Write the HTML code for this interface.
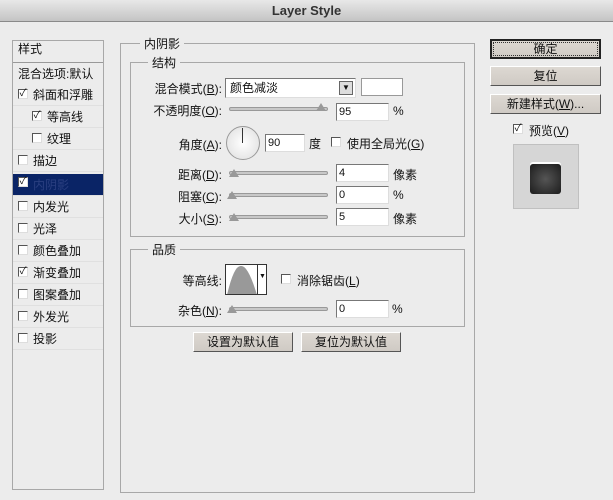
<!DOCTYPE html><html><head><meta charset="utf-8"><style>
*{box-sizing:border-box;margin:0;padding:0}
body{width:613px;height:500px;background:#ececec;font-family:"Liberation Sans","Noto Sans CJK SC","WenQuanYi Zen Hei",sans-serif;font-size:12px;color:#111;position:relative;overflow:hidden}
.a{position:absolute;white-space:nowrap}
.title{left:0;top:0;width:613px;height:22px;background:linear-gradient(#e8e8e8,#c4c4c4);border-bottom:1px solid #8a8a8a;text-align:center;font-size:13px;font-weight:bold;color:#333;line-height:22px}
.box{position:absolute;border:1px solid #a8a8a8}
.cb{position:absolute;width:10px;height:10px;background:#fff;border:1px solid #555;border-right-color:#ddd;border-bottom-color:#ddd;font-size:10px;line-height:8px;text-align:center}
.inp{position:absolute;height:18px;background:#fff;border:1px solid #777;border-right-color:#ddd;border-bottom-color:#ddd;padding-left:2px;line-height:16px;font-size:11px}
.track{position:absolute;height:4px;background:#c8c8c8;border:1px solid #999;border-radius:2px}
.thumb{position:absolute;width:0;height:0;border-left:5px solid transparent;border-right:5px solid transparent;border-bottom:8px solid #999}
.btn{position:absolute;height:20px;background:linear-gradient(#ddd8d2,#cfcac4);border:1px solid #fff;border-right-color:#555;border-bottom-color:#555;text-align:center;line-height:18px}
.row{position:absolute;left:13px;width:90px;height:22px;border-bottom:1px solid #e0e0e0;line-height:22px}
.lbl{position:absolute;text-align:right}
</style></head><body>
<div class="a title">Layer Style</div>
<!-- left list -->
<div class="box" style="left:12px;top:40px;width:92px;height:450px;background:#ececec"></div>
<div class="a" style="left:18px;top:40px">样式</div>
<div class="a" style="left:13px;top:62px;width:90px;border-top:1px solid #999"></div>
<div class="a" style="left:18px;top:65px">混合选项:默认</div>
<div class="row" style="top:84px"><span class="cb" style="left:5px;top:5px">✓</span><span class="a" style="left:20px">斜面和浮雕</span></div>
<div class="row" style="top:106px"><span class="cb" style="left:19px;top:5px">✓</span><span class="a" style="left:34px">等高线</span></div>
<div class="row" style="top:128px"><span class="cb" style="left:19px;top:5px"></span><span class="a" style="left:34px">纹理</span></div>
<div class="row" style="top:150px"><span class="cb" style="left:5px;top:5px"></span><span class="a" style="left:20px">描边</span></div>
<div class="row" style="top:174px;background:#0a2466;color:#0a2466"><span class="cb" style="left:5px;top:3px;color:#111">✓</span><span class="a" style="left:20px;color:#2a3f80">内阴影</span></div>
<div class="row" style="top:196px"><span class="cb" style="left:5px;top:5px"></span><span class="a" style="left:20px">内发光</span></div>
<div class="row" style="top:218px"><span class="cb" style="left:5px;top:5px"></span><span class="a" style="left:20px">光泽</span></div>
<div class="row" style="top:240px"><span class="cb" style="left:5px;top:5px"></span><span class="a" style="left:20px">颜色叠加</span></div>
<div class="row" style="top:262px"><span class="cb" style="left:5px;top:5px">✓</span><span class="a" style="left:20px">渐变叠加</span></div>
<div class="row" style="top:284px"><span class="cb" style="left:5px;top:5px"></span><span class="a" style="left:20px">图案叠加</span></div>
<div class="row" style="top:306px"><span class="cb" style="left:5px;top:5px"></span><span class="a" style="left:20px">外发光</span></div>
<div class="row" style="top:328px"><span class="cb" style="left:5px;top:5px"></span><span class="a" style="left:20px">投影</span></div>
<!-- main -->
<div class="box" style="left:120px;top:43px;width:355px;height:450px"></div>
<div class="a" style="left:140px;top:35px;background:#ececec;padding:0 4px">内阴影</div>
<div class="box" style="left:130px;top:62px;width:335px;height:175px"></div>
<div class="a" style="left:148px;top:54px;background:#ececec;padding:0 4px">结构</div>
<div class="lbl" style="right:391px;top:80px">混合模式(<u>B</u>):</div>
<div class="inp" style="left:225px;top:78px;width:131px;height:20px;font-size:12px;line-height:18px;padding-left:4px">颜色减淡</div>
<div class="a" style="left:339px;top:81px;width:14px;height:14px;background:#ddd;border:1px solid #666;font-size:8px;text-align:center;line-height:12px">▼</div>
<div class="a" style="left:361px;top:78px;width:42px;height:18px;background:#fff;border:1px solid #999"></div>
<div class="lbl" style="right:391px;top:102px">不透明度(<u>O</u>):</div>
<div class="track" style="left:229px;top:107px;width:99px"></div><div class="thumb" style="left:316px;top:103px"></div>
<div class="inp" style="left:336px;top:103px;width:53px">95</div><div class="a" style="left:393px;top:104px">%</div>
<div class="lbl" style="right:391px;top:136px">角度(<u>A</u>):</div>
<div class="a" style="left:226px;top:126px;width:34px;height:34px;border-radius:50%;background:radial-gradient(#fff,#ddd);border:1px solid #999"></div>
<div class="a" style="left:242px;top:128px;width:1px;height:15px;background:#333"></div>
<div class="inp" style="left:265px;top:134px;width:40px">90</div><div class="a" style="left:309px;top:135px">度</div>
<span class="cb" style="left:331px;top:137px"></span><div class="a" style="left:347px;top:135px">使用全局光(<u>G</u>)</div>
<div class="lbl" style="right:391px;top:166px">距离(<u>D</u>):</div>
<div class="track" style="left:229px;top:171px;width:99px"></div><div class="thumb" style="left:229px;top:169px"></div>
<div class="inp" style="left:336px;top:164px;width:53px">4</div><div class="a" style="left:393px;top:166px">像素</div>
<div class="lbl" style="right:391px;top:188px">阻塞(<u>C</u>):</div>
<div class="track" style="left:229px;top:193px;width:99px"></div><div class="thumb" style="left:227px;top:191px"></div>
<div class="inp" style="left:336px;top:186px;width:53px">0</div><div class="a" style="left:393px;top:188px">%</div>
<div class="lbl" style="right:391px;top:210px">大小(<u>S</u>):</div>
<div class="track" style="left:229px;top:215px;width:99px"></div><div class="thumb" style="left:229px;top:213px"></div>
<div class="inp" style="left:336px;top:208px;width:53px">5</div><div class="a" style="left:393px;top:210px">像素</div>
<div class="box" style="left:130px;top:249px;width:335px;height:78px"></div>
<div class="a" style="left:148px;top:241px;background:#ececec;padding:0 4px">品质</div>
<div class="lbl" style="right:391px;top:272px">等高线:</div>
<div class="a" style="left:225px;top:264px;width:42px;height:31px;background:#fff;border:1px solid #333;overflow:hidden"><svg width="32" height="30" style="position:absolute;left:0;top:0"><path d="M1 30 Q8 0 15 1 Q22 0 31 30Z" fill="#999"/></svg><div style="position:absolute;left:31px;top:0;width:1px;height:30px;background:#333"></div><div style="position:absolute;left:33px;top:8px;font-size:7px">▼</div></div>
<span class="cb" style="left:281px;top:274px"></span><div class="a" style="left:297px;top:272px">消除锯齿(<u>L</u>)</div>
<div class="lbl" style="right:391px;top:302px">杂色(<u>N</u>):</div>
<div class="track" style="left:229px;top:307px;width:99px"></div><div class="thumb" style="left:227px;top:305px"></div>
<div class="inp" style="left:336px;top:300px;width:53px">0</div><div class="a" style="left:392px;top:302px">%</div>
<div class="btn" style="left:193px;top:332px;width:100px">设置为默认值</div>
<div class="btn" style="left:301px;top:332px;width:100px">复位为默认值</div>
<!-- right -->
<div class="btn" style="left:490px;top:39px;width:111px;height:20px;border:2px solid #222;outline:1px dotted #333;outline-offset:-4px;line-height:16px">确定</div>
<div class="btn" style="left:490px;top:66px;width:111px">复位</div>
<div class="btn" style="left:490px;top:94px;width:111px">新建样式(<u>W</u>)...</div>
<span class="cb" style="left:513px;top:124px">✓</span><div class="a" style="left:529px;top:122px">预览(<u>V</u>)</div>
<div class="a" style="left:513px;top:144px;width:66px;height:65px;background:#d6d6d6;border:1px solid #c0c0c0"></div>
<div class="a" style="left:530px;top:164px;width:31px;height:30px;background:radial-gradient(#555,#1c1c1c);border-radius:3px;box-shadow:0 -2px 0 #fff"></div>
</body></html>
